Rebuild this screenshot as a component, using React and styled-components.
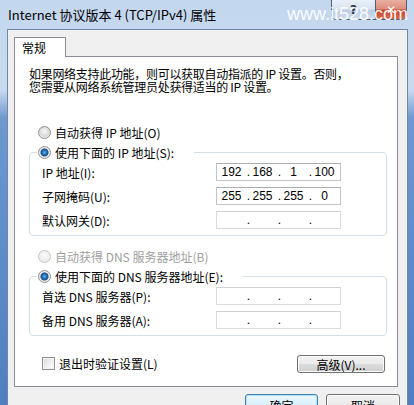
import React from "react";
import styled, { createGlobalStyle, css } from "styled-components";

const GlobalStyle = createGlobalStyle`
  html, body {
    margin: 0;
    padding: 0;
    background: #ffffff;
  }
  body {
    font-family: "Noto Sans CJK SC", "Noto Sans", sans-serif;
    color: #000000;
  }
  * {
    box-sizing: border-box;
  }
`;

const Window = styled.div`
  position: relative;
  width: 414px;
  height: 405px;
  overflow: hidden;
  display: flex;
  flex-direction: column;
  padding: 0 6px 0 7px;
  background: linear-gradient(
    to bottom,
    #c3d7ee 0px,
    #c8daef 90px,
    #6e98cf 118px,
    #4f7fc0 100%
  );
`;

const TitleBar = styled.div`
  height: 29px;
  flex: none;
  display: flex;
  align-items: flex-start;
  font-size: 13px;
  white-space: nowrap;
`;

const Title = styled.span`
  padding-left: 1px;
  line-height: 29px;
`;

const Controls = styled.div`
  margin-left: auto;
  margin-right: 1px;
  display: flex;
  height: 20px;
  border: 1px solid #4e5f78;
  border-top: none;
  border-radius: 0 0 5px 5px;
  overflow: hidden;
  font-family: "DejaVu Sans", sans-serif;
  font-weight: bold;
  font-size: 12px;
`;

const HelpButton = styled.div`
  width: 44px;
  height: 19px;
  display: flex;
  align-items: center;
  justify-content: center;
  color: #233044;
  border-right: 1px solid #4e5f78;
  background: linear-gradient(to bottom, #e9eff7 0%, #d9e4f1 45%, #bccde4 55%, #cddcee 100%);
`;

const CloseButton = styled.div`
  width: 30px;
  height: 19px;
  display: flex;
  align-items: center;
  justify-content: center;
  color: #ffffff;
  background: linear-gradient(to bottom, #eab0a2 0%, #de8e7c 45%, #c8432b 55%, #d66a4e 100%);
`;

const Watermark = styled.div`
  position: absolute;
  top: 3px;
  right: 6px;
  font-family: "Liberation Sans", sans-serif;
  font-size: 18px;
  line-height: 22px;
  color: rgba(255, 255, 255, 0.95);
  pointer-events: none;
`;

const Client = styled.div`
  flex: 1;
  border: 1px solid #6f87a8;
  border-bottom: none;
  background: #f0f0f0;
  padding: 7px 9px 0 6px;
  font-size: 12px;
`;

const Tabs = styled.div`
  display: flex;
`;

const Tab = styled.div`
  position: relative;
  z-index: 1;
  width: 52px;
  height: 20px;
  margin-bottom: -1px;
  border: 1px solid #898c95;
  border-bottom: none;
  background: #ffffff;
  padding-left: 7px;
  line-height: 19px;
  font-size: 12px;
`;

const Panel = styled.div`
  border: 1px solid #898c95;
  background: #ffffff;
  padding: 10px 10px 13px 14px;
  display: flex;
  flex-direction: column;
`;

const Intro = styled.p`
  margin: 0 0 29px 0;
  font-size: 12px;
  line-height: 13px;
  letter-spacing: -0.3px;
  white-space: nowrap;
`;

const RadioRow = styled.label`
  height: 20px;
  display: flex;
  align-items: center;
  gap: 4px;
  margin-left: ${(p) => (p.$inLegend ? "1px" : "9px")};
  font-size: 12px;
  white-space: nowrap;
  color: ${(p) => (p.$disabled ? "#a0a0a0" : "#000000")};
`;

const RadioDot = styled.span`
  width: 13px;
  height: 13px;
  flex: none;
  border-radius: 50%;
  border: 1px solid ${(p) => (p.$disabled ? "#c6c6c6" : "#8e8f8f")};
  background: ${(p) =>
    p.$checked
      ? "radial-gradient(circle at 50% 50%, #56b4ea 0, #2a75b5 2px, #1a4f8a 3.5px, #e7e7e7 4.5px, #f6f6f6 6px)"
      : p.$disabled
      ? "radial-gradient(circle at 50% 40%, #fbfbfb 0, #ececec 6px)"
      : "radial-gradient(circle at 50% 40%, #f7f7f7 0, #d8d8d8 5px, #eeeeee 6px)"};
`;

const Group = styled.fieldset`
  margin: 0;
  padding: 0 0 3px 0;
  border: 1px solid #d5dfe5;
  border-radius: 4px;
  min-width: 0;
`;

const Legend = styled.legend`
  margin-left: 7px;
  padding: 0 20px 0 0;
`;

const Rows = styled.div`
  margin-top: -2px;
  padding-left: 12px;
  display: flex;
  flex-direction: column;
`;

const FieldRow = styled.div`
  height: 24px;
  display: flex;
  align-items: center;
`;

const FieldLabel = styled.span`
  width: 174px;
  flex: none;
  white-space: nowrap;
  font-size: 12px;
`;

const IpBox = styled.div`
  width: 125px;
  height: 18px;
  display: flex;
  align-items: center;
  padding-left: 2px;
  background: #ffffff;
  border: 1px solid ${(p) => (p.$filled ? "#c2c4c9" : "#d9dbdf")};
  border-top-color: ${(p) => (p.$filled ? "#abadb3" : "#cfd1d5")};
  font-family: "Liberation Sans", sans-serif;
  font-size: 12px;
`;

const Octet = styled.span`
  width: 25px;
  text-align: center;
`;

const Dot = styled.span`
  width: 6px;
  text-align: right;
`;

const DnsRadio = styled.div`
  margin-top: 10px;
`;

const BottomRow = styled.div`
  margin-top: 19px;
  height: 18px;
  display: flex;
  align-items: center;
  padding-left: 13px;
  padding-right: 2px;
`;

const CheckLabel = styled.label`
  display: flex;
  align-items: center;
  gap: 4px;
  font-size: 12px;
  white-space: nowrap;
  margin-bottom: 2px;
`;

const CheckBox = styled.span`
  width: 13px;
  height: 13px;
  flex: none;
  border: 1px solid #8e8f8f;
  background: linear-gradient(135deg, #dcdcdc 0%, #f2f2f2 60%, #ffffff 100%);
  box-shadow: inset 0 0 0 1px #f4f4f4;
`;

const Button = styled.div`
  height: ${(p) => (p.$tall ? "23px" : "18px")};
  width: ${(p) => p.$width}px;
  margin-left: ${(p) => (p.$push ? "auto" : "0")};
  display: flex;
  align-items: center;
  justify-content: center;
  border-radius: 3px;
  font-size: 12px;
  white-space: nowrap;
  ${(p) =>
    p.$primary
      ? css`
          border: 1px solid #3c7fb1;
          background: linear-gradient(to bottom, #eaf6fd 0%, #d9f0fc 50%, #bee6fd 50%, #a7d9f5 100%);
          box-shadow: inset 0 0 0 1px #b6e4fb;
        `
      : css`
          border: 1px solid #707070;
          background: linear-gradient(to bottom, #f2f2f2 0%, #ebebeb 50%, #dddddd 50%, #cfcfcf 100%);
          box-shadow: inset 0 0 0 1px #fcfcfc;
        `}
`;

const Footer = styled.div`
  display: flex;
  justify-content: flex-end;
  gap: 8px;
  margin-top: 7px;
  margin-right: -2px;
`;

function IpField({ value }) {
  const parts = value ? value.split(".") : ["", "", "", ""];
  return (
    <IpBox $filled={!!value}>
      {parts.map((part, index) => (
        <React.Fragment key={index}>
          {index > 0 && <Dot>.</Dot>}
          <Octet>{part}</Octet>
        </React.Fragment>
      ))}
    </IpBox>
  );
}

function Radio({ checked, disabled, inLegend, children }) {
  return (
    <RadioRow $disabled={disabled} $inLegend={inLegend}>
      <RadioDot $checked={checked} $disabled={disabled} />
      <span>{children}</span>
    </RadioRow>
  );
}

export default function App() {
  const ipRows = [
    { label: "IP 地址(I):", value: "192.168.1.100" },
    { label: "子网掩码(U):", value: "255.255.255.0" },
    { label: "默认网关(D):", value: "" },
  ];
  const dnsRows = [
    { label: "首选 DNS 服务器(P):", value: "" },
    { label: "备用 DNS 服务器(A):", value: "" },
  ];

  return (
    <>
      <GlobalStyle />
      <Window>
        <TitleBar>
          <Title>Internet 协议版本 4 (TCP/IPv4) 属性</Title>
          <Controls>
            <HelpButton>?</HelpButton>
            <CloseButton>✕</CloseButton>
          </Controls>
        </TitleBar>
        <Watermark>www.it528.com</Watermark>
        <Client>
          <Tabs>
            <Tab>常规</Tab>
          </Tabs>
          <Panel>
            <Intro>
              如果网络支持此功能，则可以获取自动指派的 IP 设置。否则，
              <br />
              您需要从网络系统管理员处获得适当的 IP 设置。
            </Intro>
            <Radio>自动获得 IP 地址(O)</Radio>
            <Group>
              <Legend>
                <Radio checked inLegend>
                  使用下面的 IP 地址(S):
                </Radio>
              </Legend>
              <Rows>
                {ipRows.map((row) => (
                  <FieldRow key={row.label}>
                    <FieldLabel>{row.label}</FieldLabel>
                    <IpField value={row.value} />
                  </FieldRow>
                ))}
              </Rows>
            </Group>
            <DnsRadio>
              <Radio disabled>自动获得 DNS 服务器地址(B)</Radio>
            </DnsRadio>
            <Group>
              <Legend>
                <Radio checked inLegend>
                  使用下面的 DNS 服务器地址(E):
                </Radio>
              </Legend>
              <Rows>
                {dnsRows.map((row) => (
                  <FieldRow key={row.label}>
                    <FieldLabel>{row.label}</FieldLabel>
                    <IpField value={row.value} />
                  </FieldRow>
                ))}
              </Rows>
            </Group>
            <BottomRow>
              <CheckLabel>
                <CheckBox />
                <span>退出时验证设置(L)</span>
              </CheckLabel>
              <Button $push $width={88}>
                高级(V)...
              </Button>
            </BottomRow>
          </Panel>
          <Footer>
            <Button $primary $tall $width={73}>
              确定
            </Button>
            <Button $tall $width={74}>
              取消
            </Button>
          </Footer>
        </Client>
      </Window>
    </>
  );
}
